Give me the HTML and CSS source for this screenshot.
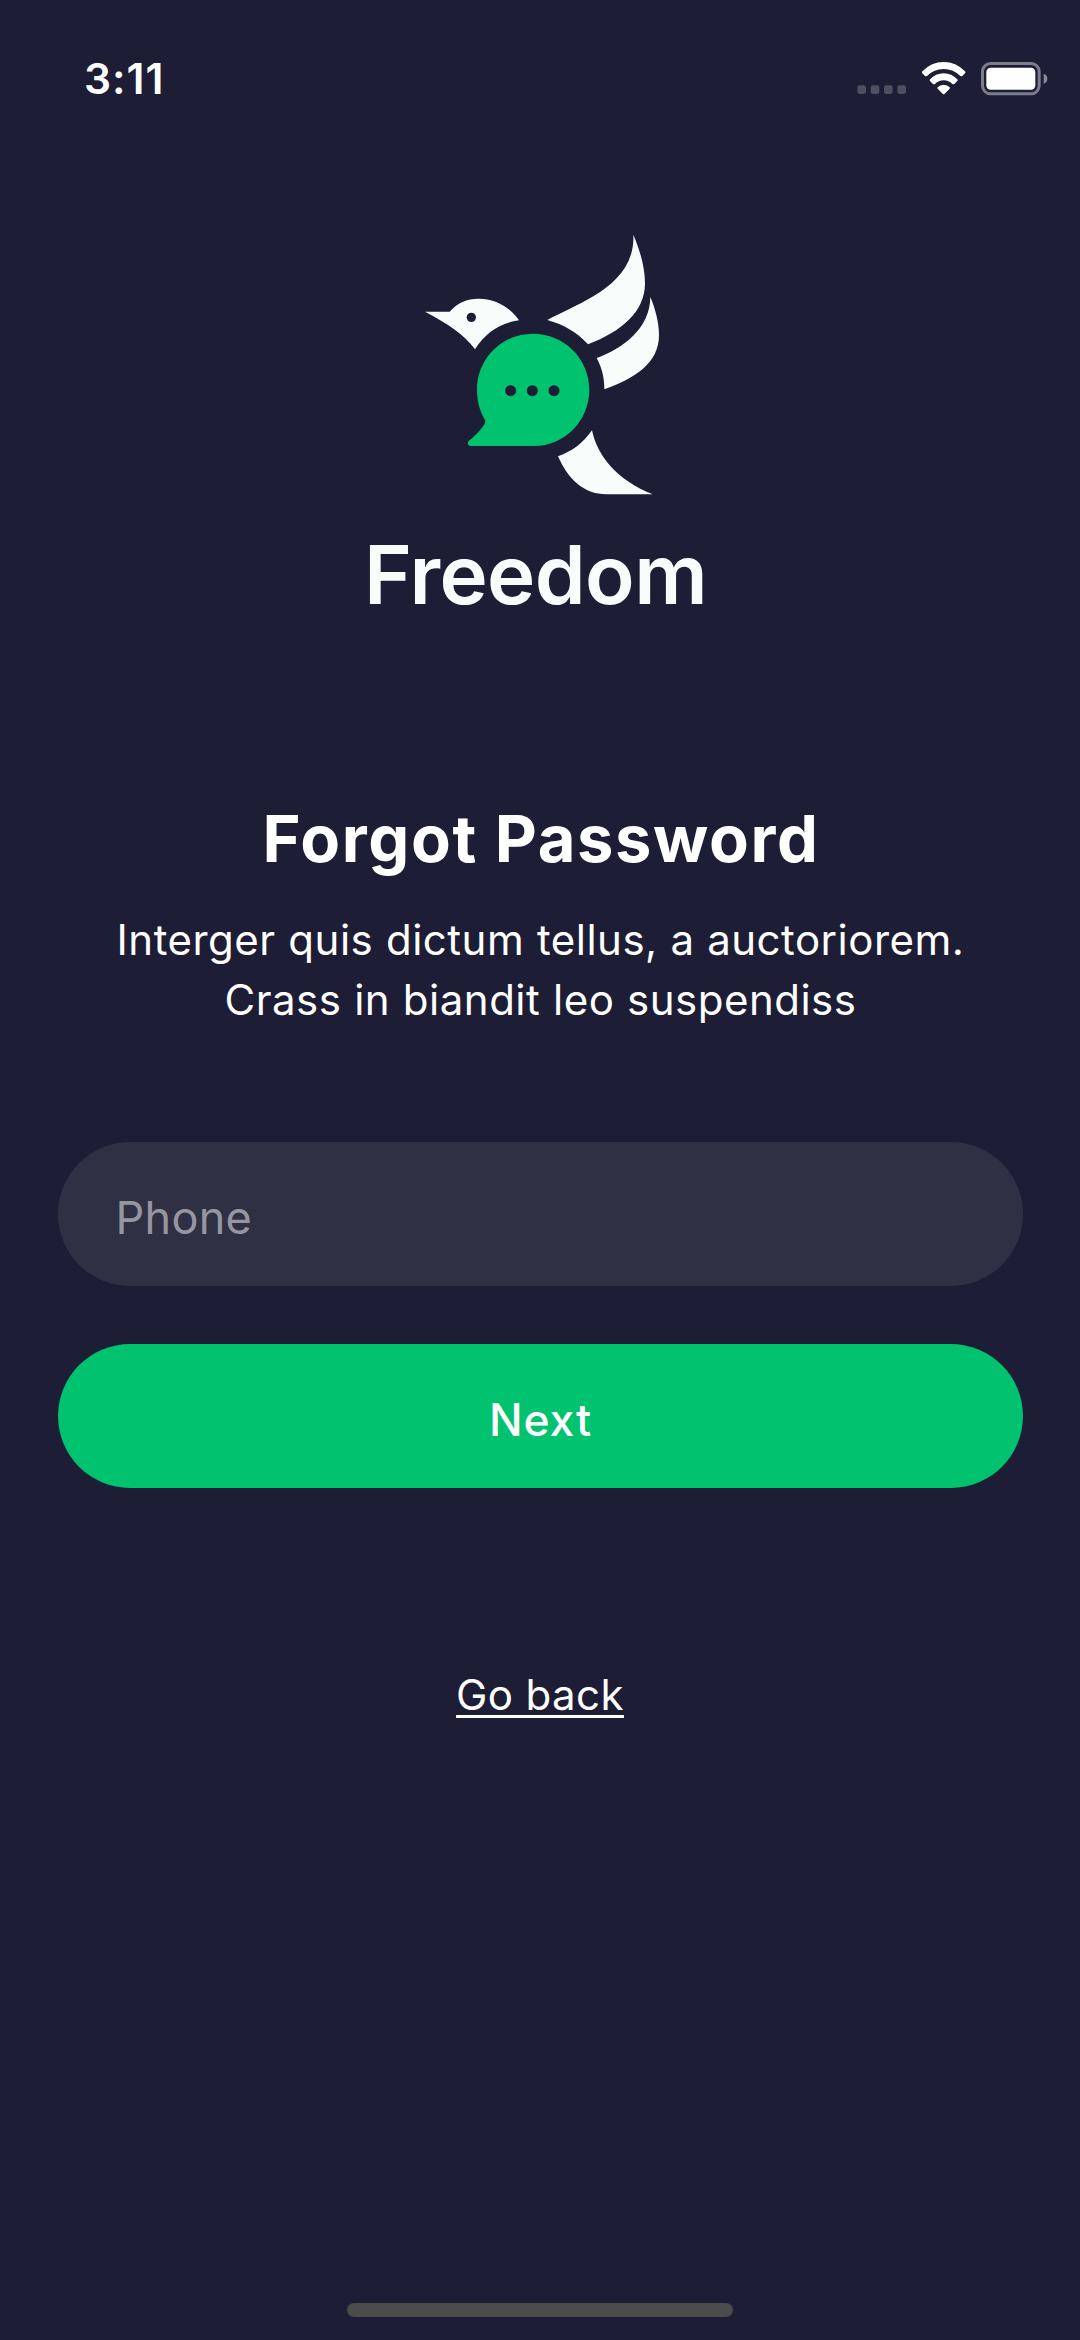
FILE: index.html
```html
<!DOCTYPE html>
<html lang="en">
<head>
<meta charset="utf-8">
<title>Forgot Password</title>
<link rel="stylesheet" href="styles.css">
</head>
<body>
<div class="screen">
  <header class="status">
    <time class="clock">3:11</time>
    <div class="indicators">
      <svg class="signal" viewBox="51 60 150 120" aria-hidden="true">
        <rect x="52" y="136" width="26" height="26" rx="7"/><rect x="92" y="136" width="26" height="26" rx="7"/><rect x="132" y="136" width="26" height="26" rx="7"/><rect x="172" y="136" width="26" height="26" rx="7"/>
      </svg>
      <svg class="wifi" viewBox="240 60 144 120" aria-hidden="true">
        <path d="M247 94Q274 66 311 66Q348 66 375 94Q378 97 375 100L367 108Q364 110 361 108Q340 87 311 87Q282 87 261 108Q258 110 255 108L247 100Q244 97 247 94Z"/>
        <path d="M270 118Q287 100 311 100Q335 100 352 118Q354 121 352 123L343 132Q340 134 337 132Q326 121 311 121Q296 121 285 132Q282 134 279 132L270 123Q268 121 270 118Z"/>
        <path d="M293 142Q300 134 311 134Q322 134 329 142Q331 144 329 146L314 161Q311 164 308 161L293 146Q291 144 293 142Z"/>
      </svg>
      <svg class="battery" viewBox="420 60 210 120" aria-hidden="true">
        <rect class="shell" x="427.500" y="70.500" width="170" height="91" rx="24"/>
        <rect class="charge" x="439" y="83" width="147" height="66" rx="13"/>
        <path class="nub" d="M611 101Q622 105 622 116Q622 127 611 131Z"/>
      </svg>
    </div>
  </header>

  <main class="content">
    <svg class="logo" viewBox="0 0 840 870" role="img" aria-label="Freedom">
      <g class="bird">
        <path d="M75 275H149C172 249 200 236 236 236C286 236 330 262 357 301C300 309 257 337 225 388C191 341 145 313 75 275Z"/>
        <path d="M700 44C718 85 735 140 735 190C735 275 665 335 564 373C531 337 492 314 442 300C475 282 535 256 580 229C650 187 704 131 700 44Z"/>
        <path d="M751 231C766 266 777 308 777 345C777 430 704 475 613 508C613 474 606 443 590 414C667 386 750 327 751 231Z"/>
        <path d="M576 631C592 708 650 780 758 823H620C550 823 503 776 474 709C517 694 549 669 576 631Z"/>
      </g>
      <path class="bubble" d="M399 341C493 341 568 416 568 509C568 603 493 678 402 678H213C203 678 200 669 207 662C226 647 241 631 252 615Q257 607 255 599C239 573 231 541 231 509C231 416 306 341 399 341Z"/>
      <g class="dots"><circle cx="214" cy="292" r="14"/><circle cx="332" cy="512" r="16.500"/><circle cx="397" cy="512" r="16.500"/><circle cx="462" cy="512" r="16.500"/></g>
    </svg>
    <div class="brand">Freedom</div>
    <h1 class="title">Forgot Password</h1>
    <p class="lead">Interger quis dictum tellus, a auctoriorem.<br>Crass in biandit leo suspendiss</p>
    <div class="field"><span>Phone</span></div>
    <div class="button"><span>Next</span></div>
    <a class="back"><span>Go back</span></a>
  </main>
  <div class="home"></div>
</div>
</body>
</html>
```
FILE: styles.css
```css
* { box-sizing: border-box; }
body { margin: 0; background: #1d1d35; color: #fff; font-family: Inter, "Liberation Sans", sans-serif; }
.screen { width: 1080px; height: 2340px; display: flex; flex-direction: column; overflow: hidden; }
.status { height: 220px; padding: 49px 30px 0 84px; display: flex; justify-content: space-between; align-items: flex-start; }
.clock { font-size: 42.5px; line-height: 60px; font-weight: 600; letter-spacing: 1px; }
.indicators { display: flex; padding-top: 11px; }
.indicators svg { height: 40px; display: block; }
.signal { width: 50px; fill: #4f4f60; }
.wifi { width: 48px; margin-left: 13px; fill: #fff; }
.battery { width: 70px; margin-left: 12px; }
.shell { fill: none; stroke: #7c7c8b; stroke-width: 9px; }
.charge { fill: #fff; }
.nub { fill: #8b8b97; }
.content { flex: 1; display: flex; flex-direction: column; align-items: center; padding: 0 57.5px; }
.logo { width: 280px; height: 290px; display: block; }
.bird { fill: #f6fdfb; }
.bubble { fill: #00c26f; }
.dots { fill: #1d1d35; }
.brand { margin-top: 15px; padding-right: 9px; font-size: 81.6px; line-height: 100px; font-weight: 600; letter-spacing: -0.6px; color: #f6fdfb; }
.title { margin: 174px 0 0; padding-left: 2px; font-size: 65px; line-height: 80px; font-weight: 700; letter-spacing: 1.6px; }
.lead { margin: 30.5px 0 0; padding-left: 1px; font-size: 42px; line-height: 60.4px; letter-spacing: 0.5px; word-spacing: 0.4px; text-align: center; white-space: nowrap; }
.field, .button { width: 100%; height: 144px; border-radius: 72px; line-height: 54px; }
.field { margin-top: 111.7px; padding: 49px 58px 0; background: #303045; color: #9696a1; font-size: 45px; letter-spacing: 0.3px; }
.button { margin-top: 58px; padding: 49px 0 0 1px; background: #00c26f; font-size: 44.5px; font-weight: 500; letter-spacing: 0.8px; text-align: center; }
.back { margin-top: 176.500px; font-size: 42px; line-height: 60px; letter-spacing: 0.4px; text-decoration: underline; text-decoration-thickness: 3px; text-underline-offset: 5px; text-decoration-skip-ink: none; }
.home { width: 386px; height: 14px; margin: 0 auto 23.5px; border-radius: 7px; background: #4b4b4b; }
```
